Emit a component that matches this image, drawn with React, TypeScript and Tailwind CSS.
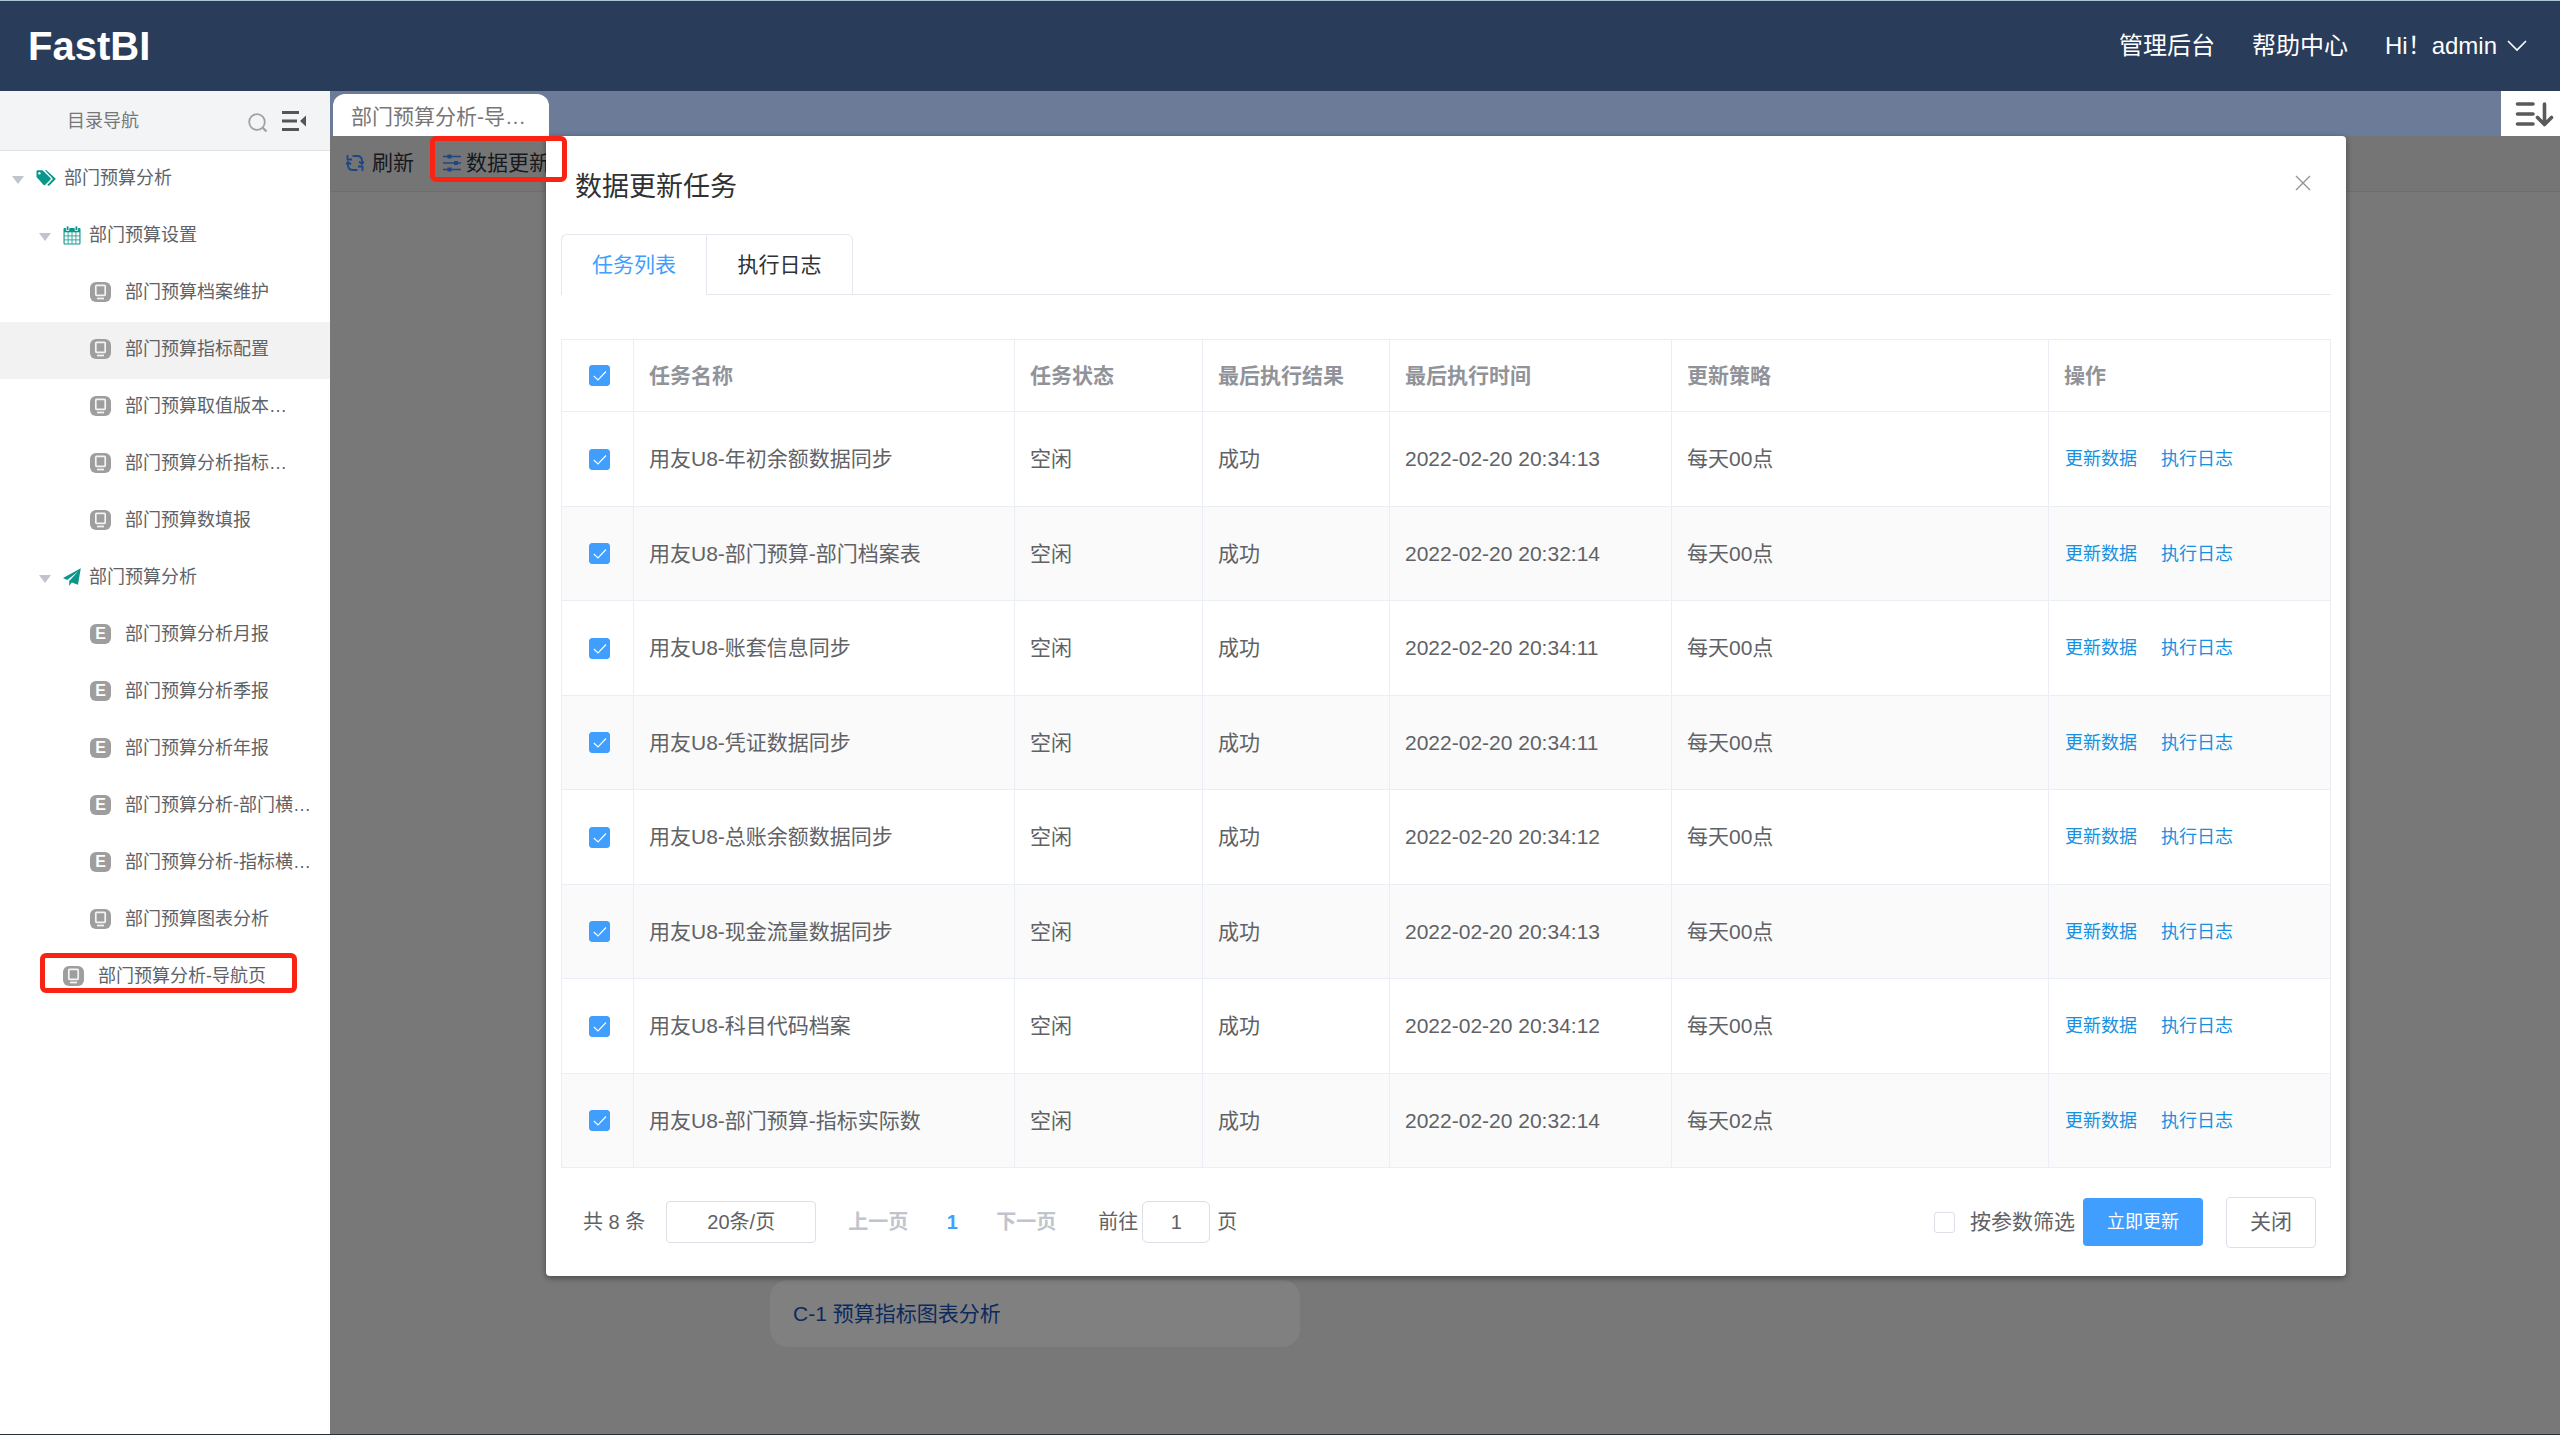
import type { ReactNode } from "react";

type NodeIcon = "tags" | "calendar" | "plane" | "screen" | "excel";

interface TreeNode {
  label: string;
  level: 1 | 2 | 3;
  icon: NodeIcon;
  hovered?: boolean;
  marked?: boolean;
}

const tree: TreeNode[] = [
  { label: "部门预算分析", level: 1, icon: "tags" },
  { label: "部门预算设置", level: 2, icon: "calendar" },
  { label: "部门预算档案维护", level: 3, icon: "screen" },
  { label: "部门预算指标配置", level: 3, icon: "screen", hovered: true },
  { label: "部门预算取值版本…", level: 3, icon: "screen" },
  { label: "部门预算分析指标…", level: 3, icon: "screen" },
  { label: "部门预算数填报", level: 3, icon: "screen" },
  { label: "部门预算分析", level: 2, icon: "plane" },
  { label: "部门预算分析月报", level: 3, icon: "excel" },
  { label: "部门预算分析季报", level: 3, icon: "excel" },
  { label: "部门预算分析年报", level: 3, icon: "excel" },
  { label: "部门预算分析-部门横…", level: 3, icon: "excel" },
  { label: "部门预算分析-指标横…", level: 3, icon: "excel" },
  { label: "部门预算图表分析", level: 3, icon: "screen" },
  { label: "部门预算分析-导航页", level: 2, icon: "screen", marked: true },
];

const tasks = [
  { name: "用友U8-年初余额数据同步", time: "2022-02-20 20:34:13", policy: "每天00点" },
  { name: "用友U8-部门预算-部门档案表", time: "2022-02-20 20:32:14", policy: "每天00点" },
  { name: "用友U8-账套信息同步", time: "2022-02-20 20:34:11", policy: "每天00点" },
  { name: "用友U8-凭证数据同步", time: "2022-02-20 20:34:11", policy: "每天00点" },
  { name: "用友U8-总账余额数据同步", time: "2022-02-20 20:34:12", policy: "每天00点" },
  { name: "用友U8-现金流量数据同步", time: "2022-02-20 20:34:13", policy: "每天00点" },
  { name: "用友U8-科目代码档案", time: "2022-02-20 20:34:12", policy: "每天00点" },
  { name: "用友U8-部门预算-指标实际数", time: "2022-02-20 20:32:14", policy: "每天02点" },
];

function TreeIcon({ icon }: { icon: NodeIcon }) {
  switch (icon) {
    case "tags":
      return (
        <svg className="h-5 w-5" viewBox="0 0 20 20" fill="#0a968c" aria-hidden>
          <path
            fillRule="evenodd"
            d="M.500 3.500A1.200 1.200 0 0 1 1.700 2.300H6.500L14.500 10a1 1 0 0 1 0 1.400L9 17a1 1 0 0 1-1.400 0L.500 9zM3.400 4a1.300 1.300 0 1 0 .01 0z"
          />
          <path d="M8.800 2.300h1.600l8.900 7.900a1 1 0 0 1 0 1.400L13.600 17.200a1.200 1.200 0 0 1-1.900 0l-.3-.4 5-5.200a1 1 0 0 0 0-1.400z" />
        </svg>
      );
    case "calendar":
      return (
        <svg className="h-5 w-[18px]" viewBox="0 0 18 20" aria-hidden>
          <rect x="0.500" y="3" width="17" height="16.500" rx="1" fill="#0a968c" />
          <path d="M3.300 1h2.600v4.500H3.300zM12.100 1h2.600v4.500h-2.600z" fill="#0a968c" stroke="#fff" strokeWidth="0.800" />
          <g fill="#fff">
            {[7.3, 11.3, 15.3].map((y) =>
              [1.6, 5.5, 9.4, 13.3].map((x) => (
                <rect key={`${x}-${y}`} x={x} y={y} width="3.100" height="3.200" />
              )),
            )}
          </g>
        </svg>
      );
    case "plane":
      return (
        <svg className="h-[18px] w-[18px]" viewBox="0 0 18 18" fill="#0a968c" aria-hidden>
          <path d="M17.800.2 0 10l4.200 2L15 3.500 6.200 13v5l2.600-3.600 6.200 2.400z" />
        </svg>
      );
    case "screen":
      return (
        <svg className="h-5 w-[21px]" viewBox="0 0 21 20" aria-hidden>
          <rect width="21" height="20" rx="6" fill="#9e9e9e" />
          <rect x="5.800" y="3.300" width="9.400" height="10" rx="0.800" fill="#9e9e9e" stroke="#f4f4f4" strokeWidth="1.700" />
          <path d="M7 16.500h7" stroke="#f4f4f4" strokeWidth="1.700" />
        </svg>
      );
    case "excel":
      return (
        <span className="flex h-5 w-[21px] items-center justify-center rounded-md bg-[#9e9e9e] text-base font-bold text-white">
          E
        </span>
      );
  }
}

function TreeRow({ node }: { node: TreeNode }) {
  const leaf = node.icon === "screen" || node.icon === "excel";
  const indent =
    node.level === 1 ? "pl-3" : node.level === 3 ? "pl-[90px]" : leaf ? "pl-[63px]" : "pl-[39px]";

  return (
    <li
      className={`relative flex h-[57px] items-center pb-1 ${indent} ${node.hovered ? "bg-[#f2f2f2]" : ""}`}
    >
      {!leaf && (
        <svg className="mt-1 mr-3 h-2 w-3 shrink-0" viewBox="0 0 12 8" fill="#c0c4cc" aria-hidden>
          <path d="M0 0h12L6 8z" />
        </svg>
      )}
      <TreeIcon icon={node.icon} />
      <a href="#" className={`whitespace-nowrap ${leaf ? "ml-[14px]" : "ml-2"}`}>
        {node.label}
      </a>
      {node.marked && (
        <span className="absolute top-1 left-10 h-10 w-[257px] rounded-md border-[5px] border-[#f92314]" />
      )}
    </li>
  );
}

function Checkbox({ id, label, checked }: { id?: string; label?: string; checked?: boolean }) {
  return (
    <span className="relative block h-[21px] w-[21px]">
      <input
        id={id}
        type="checkbox"
        aria-label={label}
        defaultChecked={checked}
        className="peer block h-[21px] w-[21px] appearance-none rounded-[3px] border border-[#dcdfe6] bg-white checked:border-[#409eff] checked:bg-[#409eff]"
      />
      <svg
        className="pointer-events-none absolute inset-0 hidden h-full w-full peer-checked:block"
        viewBox="0 0 21 21"
        fill="none"
        stroke="#fff"
        strokeWidth="1.100"
        aria-hidden
      >
        <path d="m4.800 11 4.200 4 8-8.500" />
      </svg>
    </span>
  );
}

function Th({ children }: { children: ReactNode }) {
  return (
    <th scope="col" className="border border-[#ebeef5] px-[15px] text-left font-bold text-[#909399]">
      {children}
    </th>
  );
}

function Td({ children }: { children: ReactNode }) {
  return <td className="border border-[#ebeef5] px-[15px]">{children}</td>;
}

function TaskTable() {
  return (
    <table className="w-full table-fixed border-collapse text-[21px] leading-7 text-[#606266]">
      <colgroup>
        <col className="w-[72px]" />
        <col className="w-[381px]" />
        <col className="w-[188px]" />
        <col className="w-[187px]" />
        <col className="w-[282px]" />
        <col />
        <col className="w-[282px]" />
      </colgroup>
      <thead>
        <tr className="h-[72px]">
          <th scope="col" className="border border-[#ebeef5] pl-[27px]">
            <Checkbox label="全选" checked />
          </th>
          <Th>任务名称</Th>
          <Th>任务状态</Th>
          <Th>最后执行结果</Th>
          <Th>最后执行时间</Th>
          <Th>更新策略</Th>
          <Th>操作</Th>
        </tr>
      </thead>
      <tbody>
        {tasks.map((task) => (
          <tr key={task.name} className="odd:h-[95px] even:h-[94px] even:bg-[#fafafa]">
            <td className="border border-[#ebeef5] pl-[27px]">
              <Checkbox label={task.name} checked />
            </td>
            <Td>{task.name}</Td>
            <Td>空闲</Td>
            <Td>成功</Td>
            <Td>{task.time}</Td>
            <Td>{task.policy}</Td>
            <Td>
              <span className="flex gap-6 pl-px text-lg text-[#1890e0]">
                <button type="button">更新数据</button>
                <button type="button">执行日志</button>
              </span>
            </Td>
          </tr>
        ))}
      </tbody>
    </table>
  );
}

function TaskDialog() {
  return (
    <section
      role="dialog"
      aria-labelledby="dialog-title"
      className="relative mr-[214px] ml-[216px] rounded bg-white px-[15px] shadow-[0_2px_6px_rgba(0,0,0,0.4)]"
    >
      <div className="flex h-[98px] items-center justify-between pr-5 pl-[14px]">
        <h2 id="dialog-title" className="pt-1 text-[27px] leading-9 text-[#303133]">
          数据更新任务
        </h2>
        <button type="button" aria-label="关闭对话框" className="pb-1">
          <svg className="h-4 w-4" viewBox="0 0 16 16" stroke="#909399" strokeWidth="1.400" aria-hidden>
            <path d="m1 1 14 14M15 1 1 15" />
          </svg>
        </button>
      </div>

      <div role="tablist" className="flex h-[61px] text-[21px]">
        <button
          type="button"
          role="tab"
          aria-selected="true"
          className="w-[145px] rounded-tl-md border-t border-l border-[#e4e7ed] text-[#409eff]"
        >
          任务列表
        </button>
        <button
          type="button"
          role="tab"
          aria-selected="false"
          className="w-[147px] rounded-tr-md border border-[#e4e7ed] text-[#303133]"
        >
          执行日志
        </button>
        <span className="flex-1 border-b border-[#e4e7ed]" />
      </div>

      <div className="pt-11">
        <TaskTable />
      </div>

      {/* Pagination and dialog actions */}
      <div className="flex h-[108px] items-center pr-[15px] pl-[22px] text-xl text-[#606266]">
        <span>共 8 条</span>
        <select
          aria-label="每页条数"
          className="ml-[21px] h-[42px] w-[150px] appearance-none rounded border border-[#dcdfe6] bg-white text-center"
        >
          <option>20条/页</option>
        </select>
        <button type="button" disabled className="ml-8 font-bold text-[#c0c4cc]">
          上一页
        </button>
        <button type="button" className="w-[88px] font-bold text-[#409eff]">
          1
        </button>
        <button type="button" disabled className="font-bold text-[#c0c4cc]">
          下一页
        </button>
        <label className="ml-[42px] flex items-center">
          前往
          <input
            type="text"
            defaultValue="1"
            className="mr-[7px] ml-1 h-[42px] w-[68px] rounded-md border border-[#dcdfe6] text-center"
          />
          页
        </label>
        <span className="ml-auto flex items-center text-[21px]">
          <Checkbox id="filter-by-param" />
          <label htmlFor="filter-by-param" className="ml-[15px]">
            按参数筛选
          </label>
          <button
            type="button"
            className="ml-2 h-12 w-[120px] rounded bg-[#409eff] text-lg text-white"
          >
            立即更新
          </button>
          <button type="button" className="ml-[23px] h-[51px] w-[90px] rounded border border-[#dcdfe6]">
            关闭
          </button>
        </span>
      </div>
    </section>
  );
}

export default function App() {
  return (
    <div className="flex min-h-screen flex-col border-b border-[#26303a] bg-white font-['Liberation_Sans','Noto_Sans_CJK_SC',sans-serif]">
      <header className="flex h-[91px] items-center justify-between border-t border-[#a9c6d6] bg-[#293c5a] pr-[33px] pl-7 text-white">
        <h1 className="text-[40px] leading-none font-bold">FastBI</h1>
        <nav className="flex items-center gap-[37px] text-2xl">
          <a href="#">管理后台</a>
          <a href="#">帮助中心</a>
          <button type="button" className="flex items-center gap-2.5">
            Hi！admin
            <svg className="h-3 w-5" viewBox="0 0 20 12" fill="none" stroke="#fff" strokeWidth="1.600" aria-hidden>
              <path d="m1 1 9 9 9-9" />
            </svg>
          </button>
        </nav>
      </header>

      <div className="flex flex-1">
        <aside className="w-[330px] shrink-0 text-lg text-[#606266]">
          <div className="flex h-[60px] items-center border-b border-[#dfe2e5] bg-[#f3f4f6] pr-6 pl-[67px] text-[#777]">
            <span className="flex-1">目录导航</span>
            <button type="button" aria-label="搜索">
              <svg className="mt-1 h-5 w-5" viewBox="0 0 20 20" fill="none" stroke="#a3a3a3" strokeWidth="1.800" aria-hidden>
                <circle cx="9" cy="9" r="7.800" />
                <path d="m14.500 14.500 4 4" strokeWidth="2.400" />
              </svg>
            </button>
            <button type="button" aria-label="收起目录" className="ml-3.5">
              <svg className="h-[22px] w-6" viewBox="0 0 24 22" fill="#555" aria-hidden>
                <path d="M0 1h17v3H0zM0 9.500h15v3H0zM0 18h17v3H0zM24 5.500v11L18 11z" />
              </svg>
            </button>
          </div>
          <ul>
            {tree.map((node, i) => (
              <TreeRow key={i} node={node} />
            ))}
          </ul>
        </aside>

        <main className="flex min-w-0 flex-1 flex-col bg-[#787878]">
          {/* Open pages */}
          <div className="flex h-[45px] items-end justify-between bg-[#6c7b98] pl-[3px]">
            <button
              type="button"
              className="h-[42px] w-[216px] rounded-t-xl bg-white pt-1 pl-[18px] text-left text-[21px] text-[#777]"
            >
              部门预算分析-导…
            </button>
            <button
              type="button"
              aria-label="页签操作"
              className="flex h-full w-[59px] items-center justify-end bg-white pr-1.5"
            >
              <svg
                className="h-[26px] w-10"
                viewBox="0 0 40 26"
                fill="none"
                stroke="#5a5a5a"
                strokeWidth="3.600"
                strokeLinecap="round"
                strokeLinejoin="round"
                aria-hidden
              >
                <path d="M3.500 3h15.500M3.500 13h15.500M3.500 23h15.500M30.500 3v20M23.500 16.500l7 7 7-7" />
              </svg>
            </button>
          </div>

          <div className="relative flex-1">
            {/* Page behind the dialog */}
            <div className="absolute inset-x-0 top-0 flex h-14 items-center border-b border-[#6e6e6e] bg-[#757575] pb-0.5 pl-4 text-[21px] text-[#15181c]">
              <button type="button" className="flex items-center gap-2">
                <svg className="h-[18px] w-[18px]" viewBox="0 0 18 18" fill="none" stroke="#1f4684" strokeWidth="1.800" aria-hidden>
                  <path d="M6.500 2H11q5 0 5 5v2.500M13 7.500l3 2.500 2-2.500" />
                  <path d="M11.500 16H7q-5 0-5-5V8.500M0 10.500 2 8l3 2.500" />
                  <path d="M1.500 1v4.500H6M16.500 17v-4.500H12" />
                </svg>
                刷新
              </button>
              <button type="button" className="ml-7 flex items-center gap-1">
                <svg className="h-[18px] w-5" viewBox="0 0 20 18" stroke="#1f4684" strokeWidth="1.400" aria-hidden>
                  <path d="M1 2.500h18M1 9h18M1 15.500h18" />
                  <path d="M7.500.5v4M14 7v4M7.500 13.500v4" strokeWidth="4" />
                </svg>
                数据更新
              </button>
            </div>
            <TaskDialog />
            <span className="absolute top-0 left-[100px] h-[46px] w-[137px] rounded-md border-[5px] border-[#f92314]" />

            <a
              href="#"
              className="mt-1 ml-[440px] flex h-[67px] w-[530px] items-center rounded-[18px] bg-[#808080] pl-[23px] text-[21px] text-[#0b2a5e]"
            >
              C-1 预算指标图表分析
            </a>
          </div>
        </main>
      </div>
    </div>
  );
}
